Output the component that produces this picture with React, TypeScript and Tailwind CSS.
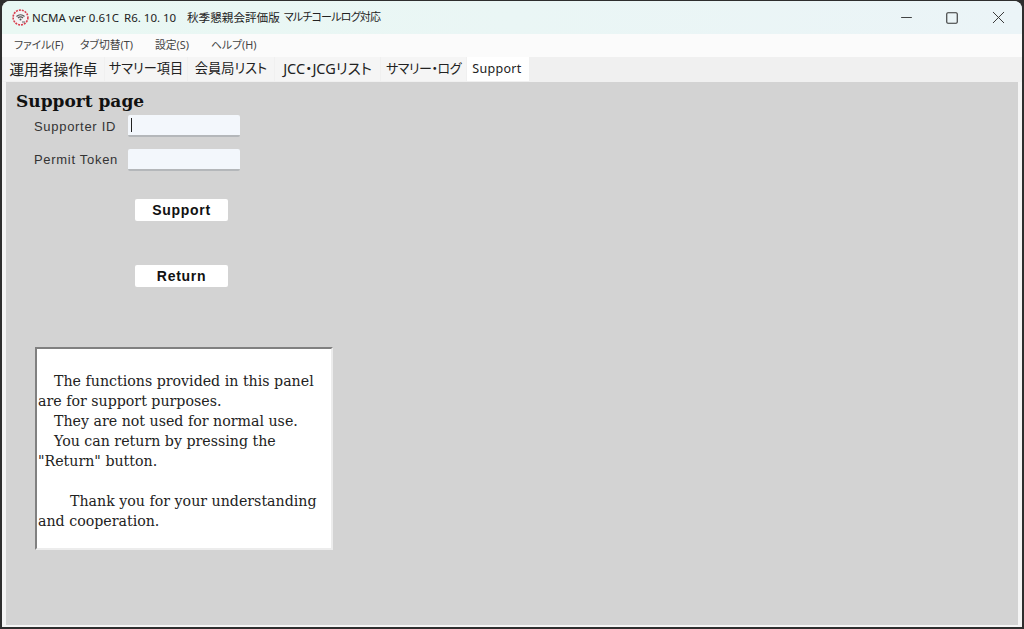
import { Minus, Square, X } from 'lucide-react';

const uiFont = "font-['Noto_Sans','Noto_Sans_CJK_JP',sans-serif]";
const latinFont = "font-['Liberation_Sans','Noto_Sans_CJK_JP',sans-serif]";
const bodyFont = "font-['DejaVu_Serif','Liberation_Serif',serif]";

const menus = [
  { label: 'ファイル(F)', width: 'w-[66px]' },
  { label: 'タブ切替(T)', width: 'w-[75px]' },
  { label: '設定(S)', width: 'w-[56px]' },
  { label: 'ヘルプ(H)', width: 'w-[50px]' },
];

const tabs = [
  { label: '運用者操作卓', className: 'w-[101px] bg-[#f5f5f5] text-[14.7px]' },
  { label: 'サマリー項目', className: 'w-[82px] bg-[#f5f5f5] text-[13.2px]' },
  { label: '会員局リスト', className: 'w-[86px] bg-[#f5f5f5] text-[13.2px]' },
  { label: 'JCC・JCGリスト', className: 'w-[105px] bg-[#f5f5f5] text-[14.5px]' },
  { label: 'サマリー・ログ', className: 'w-[85px] bg-[#f5f5f5] text-[13px] tracking-[-0.5px]' },
  { label: 'Support', className: 'w-[62px] bg-white pr-[2px] text-[12.5px] tracking-[0.3px]' },
];

const notice = [
  { text: 'The functions provided in this panel', indent: 'pl-[16px]' },
  { text: 'are for support purposes.', indent: '' },
  { text: 'They are not used for normal use.', indent: 'pl-[16px]' },
  { text: 'You can return by pressing the', indent: 'pl-[16px]' },
  { text: '"Return" button.', indent: '' },
  { text: '\u00a0', indent: '' },
  { text: 'Thank you for your understanding', indent: 'pl-[32px]' },
  { text: 'and cooperation.', indent: '' },
];

function AppIcon() {
  return (
    <svg width="17" height="17" viewBox="0 0 17 17" className="shrink-0">
      <circle cx="8.5" cy="8.5" r="7.4" fill="#f4f2f4" stroke="#d8404f" strokeWidth="1.6" strokeDasharray="2 1" />
      <path d="M4.5 7.5a5.5 5.5 0 0 1 8 0M6 9a3.4 3.4 0 0 1 5 0" fill="none" stroke="#555" strokeWidth="1.2" />
      <circle cx="8.5" cy="10.6" r="1" fill="#555" />
      <path d="M10 13h3" stroke="#666" strokeWidth="1.2" />
    </svg>
  );
}

function Field({ label, caret }: { label: string; caret?: boolean }) {
  return (
    <div className="flex h-[22px] items-center">
      <div className={`w-[94px] text-[13px] tracking-[0.7px] whitespace-nowrap text-[#333] ${caret ? 'pt-[1px]' : ''} ${latinFont}`}>{label}</div>
      <div className="flex h-[22px] w-[112px] items-center rounded-[2px] border-b-2 border-[#b4b7ba] bg-[#f3f7fc] pl-[3px]">
        {caret && <div className="h-[14px] w-[1px] bg-[#222]" />}
      </div>
    </div>
  );
}

function ActionButton({ label }: { label: string }) {
  return (
    <button
      className={`flex h-[22px] w-[93px] items-center justify-center rounded-[2px] bg-white text-[14px] font-bold tracking-[0.7px] text-[#111] ${latinFont}`}
    >
      {label}
    </button>
  );
}

export default function App() {
  return (
    <div lang="ja" className={`flex h-[629px] w-[1024px] flex-col overflow-hidden bg-[#2e2e2e] px-[2px] pt-[1px] pb-[2px] ${uiFont}`}>
      <div className="flex min-h-0 flex-1 flex-col overflow-hidden rounded-t-[8px] bg-[#f0f0f0]">
        <div className="flex h-[33px] shrink-0 items-center bg-gradient-to-r from-[#e9f8f3] to-[#ebf4f7] pl-[10px]">
          <AppIcon />
          <div className="ml-[3px] w-[85px] text-[11.5px] whitespace-nowrap text-[#222]">NCMA ver 0.61C</div>
          <div className="ml-[7px] w-[63px] text-[11.5px] whitespace-nowrap text-[#222]">R6. 10. 10</div>
          <div className="text-[11.6px] whitespace-nowrap text-[#222]">秋季懇親会評価版</div>
          <div className="ml-[4px] text-[11px] tracking-[-0.8px] whitespace-nowrap text-[#222] [font-feature-settings:'palt']">マルチコールログ対応</div>
          <div className="ml-auto flex items-center pr-[1px] text-[#333]">
            <div className="flex w-[46px] justify-center"><Minus size={17} strokeWidth={1.3} /></div>
            <div className="flex w-[46px] justify-center"><Square size={14} strokeWidth={1.9} /></div>
            <div className="flex w-[46px] justify-center"><X size={21} strokeWidth={1.1} /></div>
          </div>
        </div>

        <div className="flex h-[23px] shrink-0 items-center bg-[#fbfbfb] pl-[12px] text-[10.8px] text-[#444] [font-feature-settings:'palt']">
          {menus.map((m) => (
            <span key={m.label} className={m.width}>{m.label}</span>
          ))}
        </div>

        <div className="flex h-[25px] shrink-0 items-start gap-[1px] bg-[#f0f0f0] pl-[1px] [font-feature-settings:'palt']">
          {tabs.map((t) => (
            <div key={t.label} className={`flex h-[24px] items-center justify-center whitespace-nowrap text-[#222] ${t.className}`}>
              {t.label}
            </div>
          ))}
        </div>

        <div className="flex min-h-0 flex-1 flex-col border-x-[4px] border-b-[2px] border-x-[#f4f4f4] border-b-[#f4f4f4] bg-[#d3d3d3] pl-[10px]">
          <h1 className={`mt-[8px] h-[22px] text-[17px] leading-[22px] font-bold text-[#111] ${bodyFont}`}>Support page</h1>
          <div className="mt-[3px] ml-[18px] flex flex-col gap-[12px]">
            <Field label="Supporter ID" caret />
            <Field label="Permit Token" />
          </div>
          <div className="mt-[28px] ml-[119px] flex flex-col gap-[44px]">
            <ActionButton label="Support" />
            <ActionButton label="Return" />
          </div>
          <div
            className={`mt-[60px] ml-[19px] h-[203px] w-[298px] border-2 border-t-[#808080] border-r-[#ececec] border-b-[#ececec] border-l-[#808080] bg-white pt-[22px] pl-[1px] text-[14.2px] leading-[20px] whitespace-nowrap text-[#222] ${bodyFont}`}
          >
            {notice.map((line, i) => (
              <div key={i} className={line.indent}>
                {line.text}
              </div>
            ))}
          </div>
        </div>
      </div>
    </div>
  );
}
